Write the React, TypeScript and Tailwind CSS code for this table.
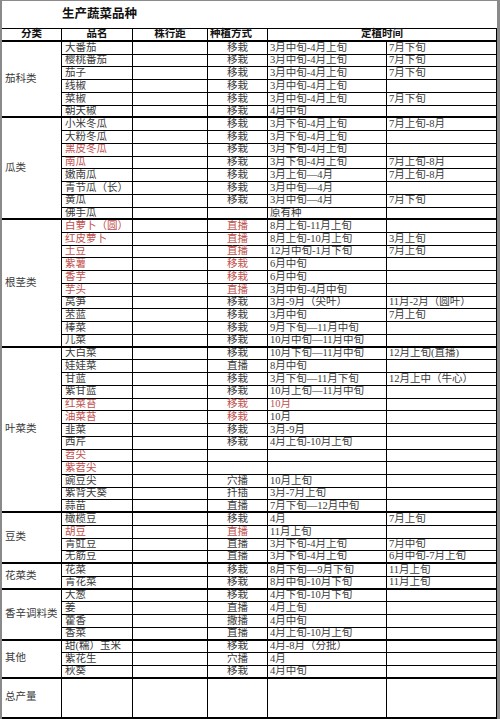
import clsx from 'clsx';

type Row = {
  name: string;
  method: string;
  t1: string;
  t2: string;
  red?: string; // n = name, m = method, t = first time column
};

const groups: { label: string; rows: Row[] }[] = [
  {
    label: '茄科类',
    rows: [
      { name: '大番茄', method: '移栽', t1: '3月中旬-4月上旬', t2: '7月下旬' },
      { name: '樱桃番茄', method: '移栽', t1: '3月中旬-4月上旬', t2: '7月下旬' },
      { name: '茄子', method: '移栽', t1: '3月中旬-4月上旬', t2: '7月下旬' },
      { name: '线椒', method: '移栽', t1: '3月中旬-4月上旬', t2: '' },
      { name: '菜椒', method: '移栽', t1: '3月中旬-4月上旬', t2: '7月下旬' },
      { name: '朝天椒', method: '移栽', t1: '4月中旬', t2: '' },
    ],
  },
  {
    label: '瓜类',
    rows: [
      { name: '小米冬瓜', method: '移栽', t1: '3月下旬-4月上旬', t2: '7月上旬-8月' },
      { name: '大粉冬瓜', method: '移栽', t1: '3月下旬-4月上旬', t2: '' },
      { name: '黑皮冬瓜', method: '移栽', t1: '3月下旬-4月上旬', t2: '', red: 'n' },
      { name: '南瓜', method: '移栽', t1: '3月下旬-4月上旬', t2: '7月上旬-8月', red: 'n' },
      { name: '嫩南瓜', method: '移栽', t1: '3月上旬—4月', t2: '7月上旬-8月' },
      { name: '青节瓜（长）', method: '移栽', t1: '3月中旬—4月', t2: '' },
      { name: '黄瓜', method: '移栽', t1: '3月中旬—4月', t2: '7月下旬' },
      { name: '佛手瓜', method: '', t1: '原有种', t2: '' },
    ],
  },
  {
    label: '根茎类',
    rows: [
      { name: '白萝卜（圆）', method: '直播', t1: '8月上旬-11月上旬', t2: '', red: 'nm' },
      { name: '红皮萝卜', method: '直播', t1: '8月上旬-10月上旬', t2: '3月上旬', red: 'nm' },
      { name: '土豆', method: '直播', t1: '12月中旬-1月下旬', t2: '7月上旬', red: 'nm' },
      { name: '紫薯', method: '移栽', t1: '6月中旬', t2: '', red: 'nm' },
      { name: '香芋', method: '移栽', t1: '6月中旬', t2: '', red: 'nm' },
      { name: '芋头', method: '直播', t1: '3月中旬-4月中旬', t2: '', red: 'nm' },
      { name: '莴笋', method: '移栽', t1: '3月-9月（尖叶）', t2: '11月-2月（圆叶）' },
      { name: '苤蓝', method: '移栽', t1: '3月中旬', t2: '7月上旬' },
      { name: '棒菜', method: '移栽', t1: '9月下旬—11月中旬', t2: '' },
      { name: '儿菜', method: '移栽', t1: '10月中旬—11月中旬', t2: '' },
    ],
  },
  {
    label: '叶菜类',
    rows: [
      { name: '大白菜', method: '移栽', t1: '10月下旬—11月中旬', t2: '12月上旬(直播)' },
      { name: '娃娃菜', method: '直播', t1: '8月中旬', t2: '' },
      { name: '甘蓝', method: '移栽', t1: '3月下旬—11月下旬', t2: '12月上中（牛心）' },
      { name: '紫甘蓝', method: '移栽', t1: '10月上旬—11月中旬', t2: '' },
      { name: '红菜苔', method: '移栽', t1: '10月', t2: '', red: 'nmt' },
      { name: '油菜苔', method: '移栽', t1: '10月', t2: '', red: 'nm' },
      { name: '韭菜', method: '移栽', t1: '3月-9月', t2: '' },
      { name: '西芹', method: '移栽', t1: '4月上旬-10月上旬', t2: '' },
      { name: '苕尖', method: '', t1: '', t2: '', red: 'n' },
      { name: '紫苕尖', method: '', t1: '', t2: '', red: 'n' },
      { name: '豌豆尖', method: '穴播', t1: '10月上旬', t2: '' },
      { name: '紫背天葵', method: '扦插', t1: '3月-7月上旬', t2: '' },
      { name: '蒜苗', method: '直播', t1: '7月下旬—12月中旬', t2: '' },
    ],
  },
  {
    label: '豆类',
    rows: [
      { name: '橄榄豆', method: '移栽', t1: '4月', t2: '7月上旬' },
      { name: '胡豆', method: '直播', t1: '11月上旬', t2: '', red: 'nm' },
      { name: '青豇豆', method: '直播', t1: '3月下旬-4月上旬', t2: '7月中旬' },
      { name: '无筋豆', method: '直播', t1: '3月下旬-4月上旬', t2: '6月中旬-7月上旬' },
    ],
  },
  {
    label: '花菜类',
    rows: [
      { name: '花菜', method: '移栽', t1: '8月下旬—9月下旬', t2: '11月上旬' },
      { name: '青花菜', method: '移栽', t1: '8月中旬-10月下旬', t2: '11月上旬' },
    ],
  },
  {
    label: '香辛调料类',
    rows: [
      { name: '大葱', method: '移栽', t1: '4月下旬-10月下旬', t2: '' },
      { name: '姜', method: '直播', t1: '4月上旬', t2: '' },
      { name: '藿香', method: '撒播', t1: '4月中旬', t2: '' },
      { name: '香菜', method: '直播', t1: '4月上旬-10月上旬', t2: '' },
    ],
  },
  {
    label: '其他',
    rows: [
      { name: '甜(糯）玉米', method: '移栽', t1: '4月-8月（分批）', t2: '' },
      { name: '紫花生', method: '穴播', t1: '4月', t2: '' },
      { name: '秋葵', method: '移栽', t1: '4月中旬', t2: '' },
    ],
  },
];

const spans: Record<number, string> = {
  2: 'row-span-2',
  3: 'row-span-3',
  4: 'row-span-4',
  6: 'row-span-6',
  8: 'row-span-8',
  10: 'row-span-10',
  13: 'row-span-13',
};

const red = 'text-[#c0504d]';

export default function App() {
  return (
    <div className="h-[719px] w-[500px] overflow-hidden bg-white">
      <div className="w-[500px] border-t border-l-2 border-r-[3px] border-[#8a8a8a] font-['Liberation_Serif','Noto_Sans_CJK_SC',serif] text-[10.5px] text-[#3a3a3a]">
        <div className="grid grid-cols-[60px_71px_75px_60px_119px_110px] grid-rows-[28px_13px_repeat(50,12.74px)_40px]">
          {/* title */}
          <div className="col-span-6 flex items-center border-b border-black pl-[60px] text-[12.5px] font-bold text-[#111]">
            生产蔬菜品种
          </div>

          {/* header */}
          <div className="flex items-center justify-center border-r border-b-2 border-black font-bold leading-none text-[#111]">分类</div>
          <div className="flex items-center justify-center border-r border-b-2 border-black font-bold leading-none text-[#111]">品名</div>
          <div className="flex items-center justify-center border-r border-b-2 border-black font-bold leading-none text-[#111]">株行距</div>
          <div className="flex items-center border-r border-b-2 border-black pl-[2px] font-bold leading-none text-[#111]">种植方式</div>
          <div className="col-span-2 flex items-center justify-center border-r border-b-2 border-black font-bold leading-none text-[#111]">定植时间</div>

          {groups.map((group) =>
            group.rows.map((row, i) => {
              const last = i === group.rows.length - 1;
              const line = last ? 'border-b-2' : 'border-b';
              const flags = row.red || '';
              return [
                i === 0 && (
                  <div
                    key={group.label}
                    className={clsx(
                      spans[group.rows.length],
                      'flex items-center border-r border-b-2 border-black pl-[3px] leading-none whitespace-nowrap',
                    )}
                  >
                    {group.label}
                  </div>
                ),
                <div
                  key={row.name + 'n'}
                  className={clsx(line, 'flex items-center overflow-hidden border-r border-black pl-[3px] leading-none whitespace-nowrap', flags.includes('n') && red)}
                >
                  {row.name}
                </div>,
                <div key={row.name + 's'} className={clsx(line, 'border-r border-black')} />,
                <div
                  key={row.name + 'm'}
                  className={clsx(line, 'flex items-center justify-center border-r border-black leading-none whitespace-nowrap', flags.includes('m') && red)}
                >
                  {row.method}
                </div>,
                <div
                  key={row.name + 't1'}
                  className={clsx(line, 'flex items-center overflow-hidden border-r border-black pl-[2px] leading-none whitespace-nowrap', flags.includes('t') && red)}
                >
                  {row.t1}
                </div>,
                <div
                  key={row.name + 't2'}
                  className={clsx(line, 'flex items-center overflow-hidden border-r border-black pl-[2px] leading-none whitespace-nowrap')}
                >
                  {row.t2}
                </div>,
              ];
            }),
          )}

          {/* total */}
          <div className="flex items-center border-r border-b-2 border-black pl-[3px] leading-none">总产量</div>
          <div className="border-r border-b-2 border-black" />
          <div className="border-r border-b-2 border-black" />
          <div className="border-r border-b-2 border-black" />
          <div className="border-r border-b-2 border-black" />
          <div className="border-r border-b-2 border-black" />
        </div>
      </div>
    </div>
  );
}
